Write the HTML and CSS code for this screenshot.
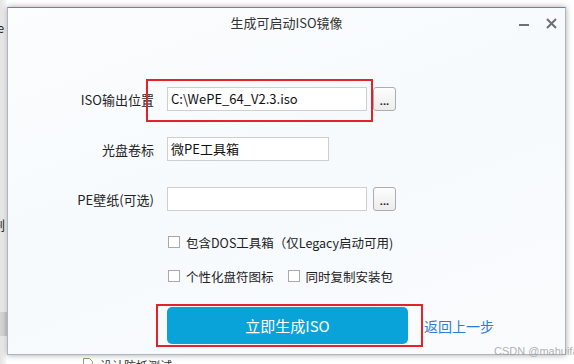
FILE: index.html
```html
<!DOCTYPE html>
<html lang="zh-CN">
<head>
<meta charset="utf-8">
<title>生成可启动ISO镜像</title>
<link rel="stylesheet" href="styles.css">
</head>
<body>
<div class="desktop">
  <div class="bg-frag bg-e">e</div>
  <div class="bg-frag bg-ju">剧</div>
  <div class="bg-left-block"></div>
  <div class="bg-bottom">
    <svg class="file-ico" width="10" height="12" viewBox="0 0 10 12"><path d="M0.5 0.5h6l3 3v8h-9z" fill="#fff" stroke="#8aa56a"/></svg>
    <span class="bottom-text">设计防抵测试</span>
    <span class="bottom-date">2025/5/20</span>
  </div>

  <div class="dialog">
    <div class="titlebar">
      <span class="title">生成可启动ISO镜像</span>
      <div class="win-ctrls">
        <span class="minimize"></span>
        <svg class="close" width="11" height="11" viewBox="0 0 11 11"><path d="M1 1L10 10M10 1L1 10" stroke="#6f6f6f" stroke-width="2"/></svg>
      </div>
    </div>

    <div class="form">
      <div class="row">
        <label class="label">ISO输出位置</label>
        <div class="field wide">C:\WePE_64_V2.3.iso</div>
        <button class="browse">...</button>
      </div>
      <div class="row">
        <label class="label">光盘卷标</label>
        <div class="field narrow">微PE工具箱</div>
      </div>
      <div class="row">
        <label class="label">PE壁纸(可选)</label>
        <div class="field wide"></div>
        <button class="browse">...</button>
      </div>

      <div class="checks first">
        <span class="check"><span class="box"></span>包含DOS工具箱（仅Legacy启动可用)</span>
      </div>
      <div class="checks second">
        <span class="check"><span class="box"></span>个性化盘符图标</span>
        <span class="check"><span class="box"></span>同时复制安装包</span>
      </div>

      <div class="actions">
        <button class="primary">立即生成ISO</button>
        <a class="back">返回上一步</a>
      </div>
    </div>

    <div class="mark mark-path"></div>
    <div class="mark mark-btn"></div>
  </div>

  <div class="watermark">CSDN @mahuifa</div>
</div>
</body>
</html>
```
FILE: styles.css
```css
html, body {
  margin: 0;
  padding: 0;
  width: 574px;
  height: 364px;
  overflow: hidden;
  background: #ffffff;
  font-family: "Noto Sans CJK SC", "Noto Sans", sans-serif;
}

.desktop {
  position: relative;
  width: 574px;
  height: 364px;
  overflow: hidden;
  background: linear-gradient(90deg, #e4e4e4 0, #f2f2f2 5px, #ffffff 7px);
}

.bg-frag {
  position: absolute;
  font-size: 13px;
  color: #222;
}
.bg-e { left: -3px; top: 18px; }
.bg-ju { left: -8px; top: 215px; }
.bg-left-block {
  position: absolute;
  left: 0;
  top: 312px;
  width: 8px;
  height: 24px;
  background: #d4d4d4;
}

.bg-bottom {
  position: absolute;
  left: 0;
  top: 355px;
  width: 574px;
  height: 20px;
  font-size: 12px;
  color: #333;
}
.file-ico { position: absolute; left: 83px; top: 3px; }
.bottom-text { position: absolute; left: 100px; top: 2px; }
.bottom-date { position: absolute; left: 497px; top: 7px; color: #444; white-space: nowrap; }

.dialog {
  position: absolute;
  left: 7px;
  top: 7px;
  width: 559px;
  height: 348px;
  box-sizing: border-box;
  border: 1px solid #aeb6bd;
  border-top: 1px solid #2a9bd3;
  background: linear-gradient(160deg, #fbfdfe 0%, #f7fafd 45%, #f9fbfd 100%);
  box-shadow: 0 0 6px rgba(0, 0, 0, 0.35);
}

.titlebar {
  position: relative;
  height: 28px;
  display: flex;
  align-items: center;
  justify-content: center;
}
.title {
  font-size: 13px;
  color: #333;
}
.win-ctrls {
  position: absolute;
  right: 8px;
  top: 10px;
  display: flex;
  align-items: center;
  gap: 17px;
}
.minimize {
  display: block;
  width: 10px;
  height: 2px;
  background: #707070;
  margin-top: 3px;
}
.close { display: block; }

.form {
  padding-top: 51px;
}

.row {
  display: flex;
  align-items: center;
  height: 24px;
  margin-bottom: 26px;
}
.label {
  width: 146px;
  text-align: right;
  font-size: 13px;
  color: #222;
  margin-right: 13px;
}
.field {
  height: 24px;
  box-sizing: border-box;
  border: 1px solid #cfcfcf;
  background: #fff;
  font-size: 13px;
  color: #111;
  line-height: 22px;
  padding-left: 3px;
}
.field.wide { width: 200px; }
.field.narrow { width: 162px; }

.browse {
  width: 23px;
  height: 24px;
  margin-left: 6px;
  padding: 0 0 4px 0;
  box-sizing: border-box;
  border: 1px solid #adadad;
  border-radius: 3px;
  background: linear-gradient(#fdfdfd, #ececec);
  font-family: "Noto Sans", sans-serif;
  font-size: 11px;
  font-weight: bold;
  color: #222;
  line-height: 10px;
  display: flex;
  align-items: flex-end;
  justify-content: center;
}

.checks {
  display: flex;
  align-items: center;
  height: 20px;
  padding-left: 160px;
  gap: 14px;
  font-size: 12.5px;
  color: #222;
}
.checks.first { margin-top: -5px; }
.checks.second { margin-top: 14px; }
.check {
  display: flex;
  align-items: center;
}
.box {
  width: 12px;
  height: 12px;
  box-sizing: border-box;
  border: 1px solid #a9a9a9;
  background: #fff;
  margin-right: 6px;
}

.actions {
  display: flex;
  align-items: center;
  margin-top: 21px;
  padding-left: 159px;
}
.primary {
  width: 241px;
  height: 37px;
  border: none;
  border-radius: 5px;
  background: #09a3da;
  color: #fff;
  font-family: "Noto Sans CJK SC", "Noto Sans", sans-serif;
  font-size: 15px;
  padding: 0;
}
.back {
  margin-left: 16px;
  font-size: 14px;
  color: #2a7ed6;
}

.mark {
  position: absolute;
  border: 2px solid #e3232b;
  box-sizing: border-box;
}
.mark-path {
  left: 138px;
  top: 71px;
  width: 227px;
  height: 43px;
}
.mark-btn {
  left: 148px;
  top: 296px;
  width: 267px;
  height: 43px;
}

.watermark {
  position: absolute;
  left: 494px;
  top: 345px;
  white-space: nowrap;
  font-family: "Liberation Sans", sans-serif;
  font-size: 11px;
  color: rgba(150, 150, 150, 0.75);
}
```
